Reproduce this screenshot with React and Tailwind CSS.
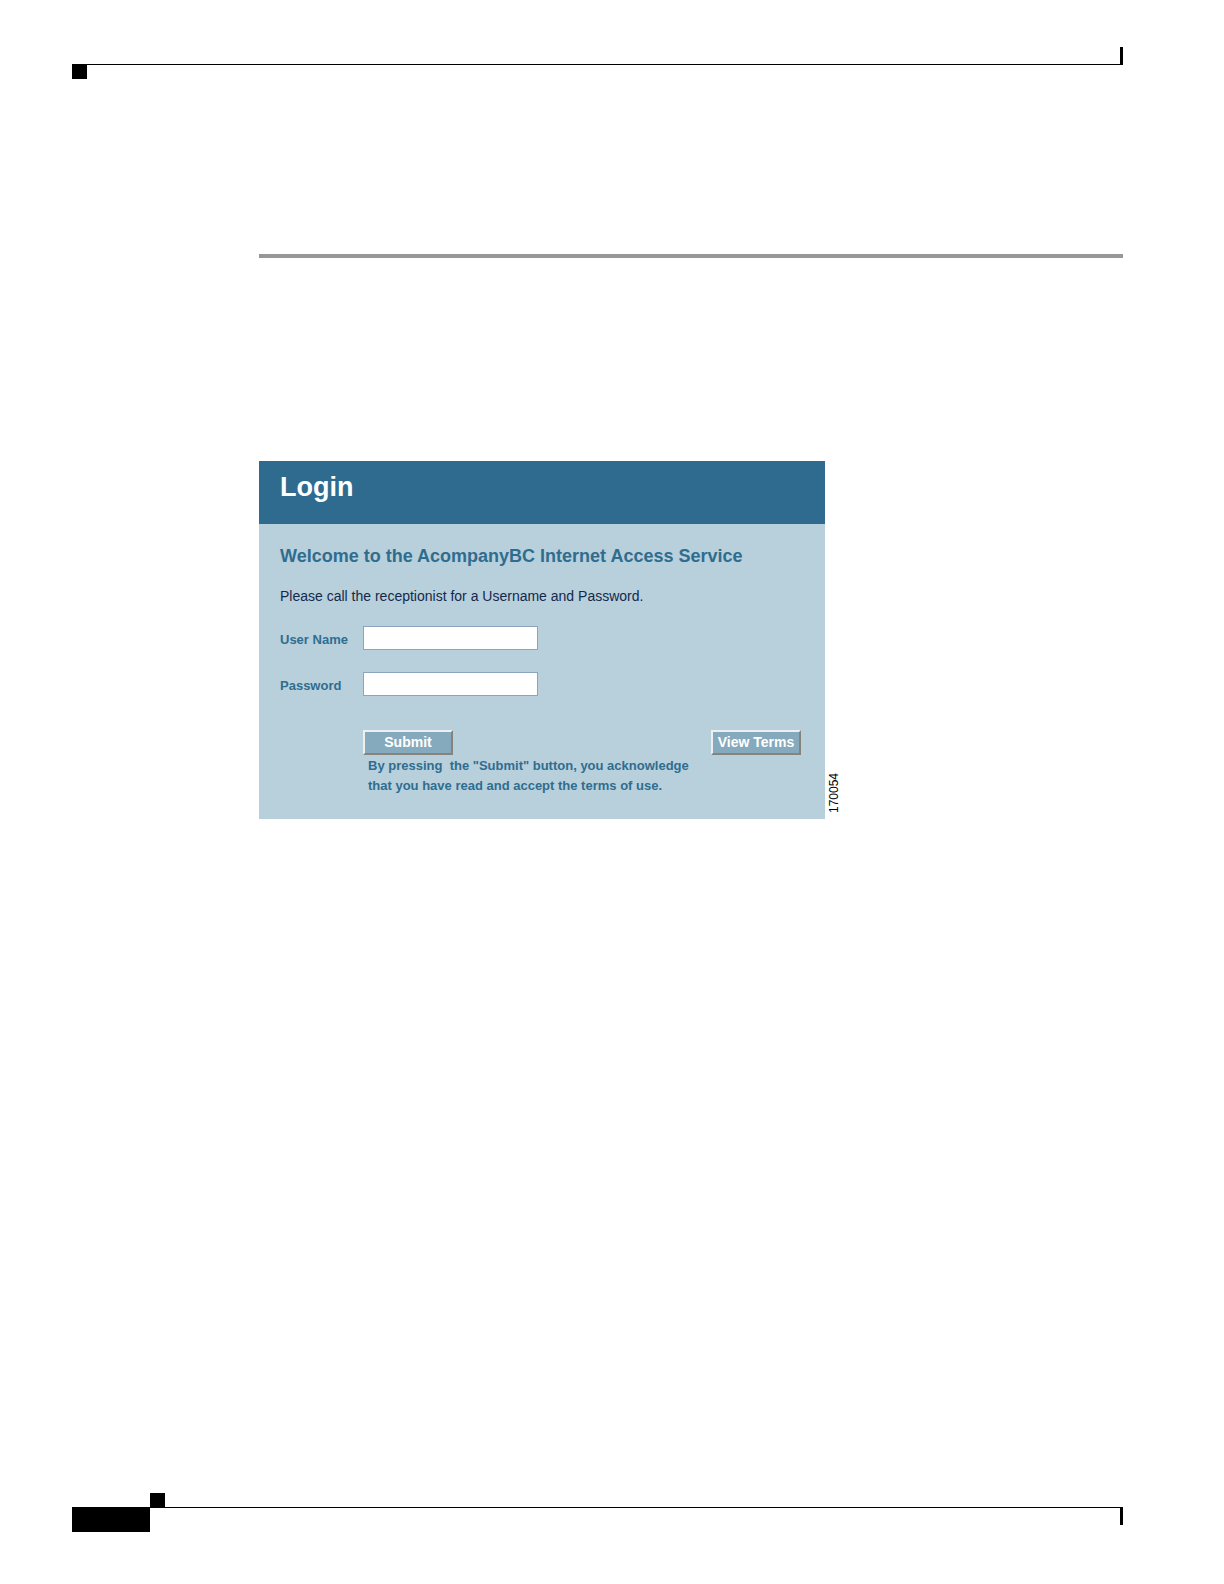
import { useState } from 'react';

const PageHeader = () => (
  <header>
    <div className="flex justify-end">
      <div className="h-[18px] w-[3px] bg-black" />
    </div>
    <div className="-mt-px h-px bg-black" />
    <div className="h-[14px] w-[15px] bg-black" />
  </header>
);

const PageFooter = () => (
  <footer className="mt-auto">
    <div className="ml-[78px] h-[14px] w-[15px] bg-black" />
    <div className="h-px bg-black" />
    <div className="flex items-start justify-between">
      <div className="h-6 w-[78px] bg-black" />
      <div className="h-[17px] w-[3px] bg-black" />
    </div>
  </footer>
);

const labelClass = 'w-[83px] shrink-0 pt-1 text-[13px] font-bold text-[#2f6d8f]';
const inputClass = 'h-6 w-[175px] border border-[#8ba5bf] bg-white px-1 text-[13px] text-[#14294a] outline-none';
const buttonClass =
  'flex h-[25px] w-[90px] items-center justify-center whitespace-nowrap border-2 border-t-[#edf0ee] border-l-[#edf0ee] border-b-[#85837b] border-r-[#85837b] bg-[#86aabd] text-[14px] font-bold text-white';

const LoginForm = () => {
  const [formData, setFormData] = useState({
    username: '',
    password: ''
  });

  const handleInputChange = (e) => {
    const { name, value } = e.target;
    setFormData((prevState) => ({
      ...prevState,
      [name]: value
    }));
  };

  const handleSubmit = (e) => {
    e.preventDefault();
  };

  return (
    <form onSubmit={handleSubmit} className="w-full max-w-[566px] bg-[#b8cfdc]">
      <div className="h-[63px] bg-[#2f6b8f] px-[21px] pt-3">
        <h1 className="text-[27px] leading-7 font-bold text-white">Login</h1>
      </div>

      <div className="pt-5 pr-6 pb-[23px] pl-[21px]">
        <h2 className="text-[18px] leading-6 font-bold text-[#2f6d8f]">
          Welcome to the AcompanyBC Internet Access Service
        </h2>
        <p className="mt-[18px] text-[14px] leading-5 text-[#14294a]">
          Please call the receptionist for a Username and Password.
        </p>

        <div className="mt-5 flex items-center">
          <label htmlFor="username" className={labelClass}>
            User Name
          </label>
          <input
            type="text"
            id="username"
            name="username"
            value={formData.username}
            onChange={handleInputChange}
            className={inputClass}
          />
        </div>

        <div className="mt-[22px] flex items-center">
          <label htmlFor="password" className={labelClass}>
            Password
          </label>
          <input
            type="password"
            id="password"
            name="password"
            value={formData.password}
            onChange={handleInputChange}
            className={inputClass}
          />
        </div>

        <div className="mt-[34px] flex justify-between pl-[83px]">
          <button type="submit" className={buttonClass}>
            Submit
          </button>
          <button type="button" className={buttonClass}>
            View Terms
          </button>
        </div>
        <p className="mt-px pl-[88px] text-[13px] leading-5 font-bold whitespace-pre text-[#2f6d8f]">
          {'By pressing  the "Submit" button, you acknowledge\nthat you have read and accept the terms of use.'}
        </p>
      </div>
    </form>
  );
};

const App = () => {
  return (
    <div className="flex min-h-screen flex-col bg-white pt-[47px] pr-[101px] pb-[52px] pl-[72px] font-['Liberation_Sans',Arial,sans-serif]">
      <PageHeader />

      <main className="mt-[175px] pl-[187px]">
        <hr className="h-1 border-0 bg-[#979797]" />
        <div className="mt-[203px] flex items-end">
          <LoginForm />
          {/* figure number, printed bottom to top */}
          <span className="rotate-180 pt-[6px] pr-[3px] text-[12px] leading-3 text-black [writing-mode:vertical-rl]">
            170054
          </span>
        </div>
      </main>

      <PageFooter />
    </div>
  );
};

export default App;
